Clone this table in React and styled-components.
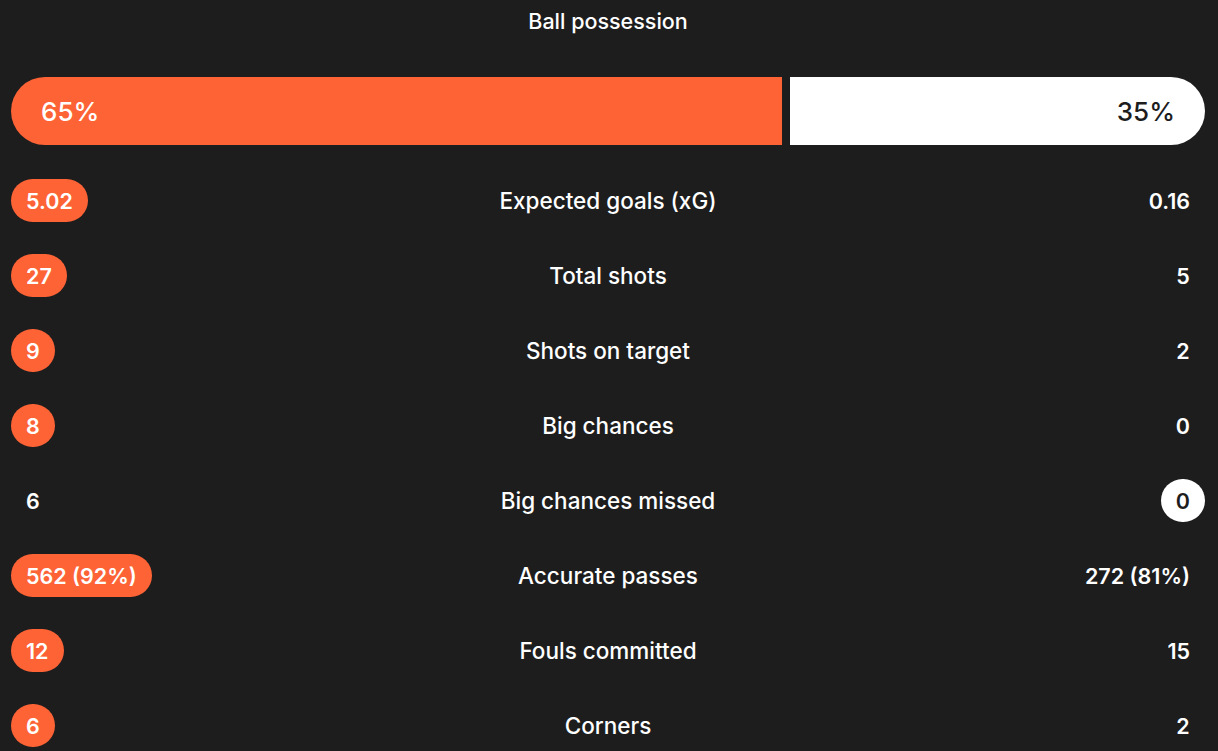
import React from 'react';
import styled, { createGlobalStyle } from 'styled-components';

const GlobalStyle = createGlobalStyle`
  html, body {
    margin: 0;
    padding: 0;
    background: #1d1d1d;
  }
  body {
    font-family: Inter, "Noto Sans", sans-serif;
    color: #fff;
  }
`;

const Page = styled.div`
  width: 1218px;
  height: 751px;
  overflow: hidden;
  padding: 0 13px 0 11px;
  box-sizing: border-box;
`;

const Title = styled.h2`
  margin: 0;
  height: 42px;
  line-height: 42px;
  text-align: center;
  font-size: 21.5px;
  font-weight: 500;
`;

const Bar = styled.div`
  display: flex;
  gap: 8px;
  height: 68px;
  margin-top: 35px;
`;

const Segment = styled.div`
  flex: ${p => (p.$side === 'left' ? '0 0 auto' : '1 1 0')};
  display: flex;
  align-items: center;
  justify-content: ${p => (p.$side === 'left' ? 'flex-start' : 'flex-end')};
  padding: 0 30px;
  box-sizing: border-box;
  font-size: 26px;
  font-weight: 500;
  background: ${p => (p.$side === 'left' ? '#fe6336' : '#ffffff')};
  color: ${p => (p.$side === 'left' ? '#ffffff' : '#1d1d1d')};
  border-radius: ${p => (p.$side === 'left' ? '34px 0 0 34px' : '0 34px 34px 0')};
`;

const List = styled.div`
  margin-top: 18px;
`;

const Row = styled.div`
  display: grid;
  grid-template-columns: 1fr auto 1fr;
  align-items: center;
  height: 75px;
`;

const Label = styled.div`
  font-size: 22.5px;
  font-weight: 500;
  text-align: center;
`;

const Side = styled.div`
  display: flex;
  justify-content: ${p => (p.$right ? 'flex-end' : 'flex-start')};
`;

const Pill = styled.span`
  display: inline-flex;
  align-items: center;
  justify-content: center;
  height: 43px;
  min-width: 44px;
  padding: 0 15px;
  box-sizing: border-box;
  border-radius: 22px;
  font-size: 21.5px;
  font-weight: 600;
  background: ${p => (p.$tone === 'orange' ? '#fe6336' : p.$tone === 'white' ? '#ffffff' : 'transparent')};
  color: ${p => (p.$tone === 'white' ? '#1d1d1d' : '#ffffff')};
`;

const stats = [
  { label: 'Expected goals (xG)', home: '5.02', away: '0.16', win: 'home' },
  { label: 'Total shots', home: '27', away: '5', win: 'home' },
  { label: 'Shots on target', home: '9', away: '2', win: 'home' },
  { label: 'Big chances', home: '8', away: '0', win: 'home' },
  { label: 'Big chances missed', home: '6', away: '0', win: 'away' },
  { label: 'Accurate passes', home: '562 (92%)', away: '272 (81%)', win: 'home' },
  { label: 'Fouls committed', home: '12', away: '15', win: 'home' },
  { label: 'Corners', home: '6', away: '2', win: 'home' },
];

const possession = { home: 65, away: 35 };

export default function App() {
  return (
    <Page>
      <GlobalStyle />
      <Title>Ball possession</Title>
      <Bar>
        <Segment $side="left" style={{ width: `calc(${possession.home}% - 5px)` }}>{possession.home}%</Segment>
        <Segment $side="right">{possession.away}%</Segment>
      </Bar>
      <List>
        {stats.map(s => (
          <Row key={s.label}>
            <Side>
              <Pill $tone={s.win === 'home' ? 'orange' : null}>{s.home}</Pill>
            </Side>
            <Label>{s.label}</Label>
            <Side $right>
              <Pill $tone={s.win === 'away' ? 'white' : null}>{s.away}</Pill>
            </Side>
          </Row>
        ))}
      </List>
    </Page>
  );
}
